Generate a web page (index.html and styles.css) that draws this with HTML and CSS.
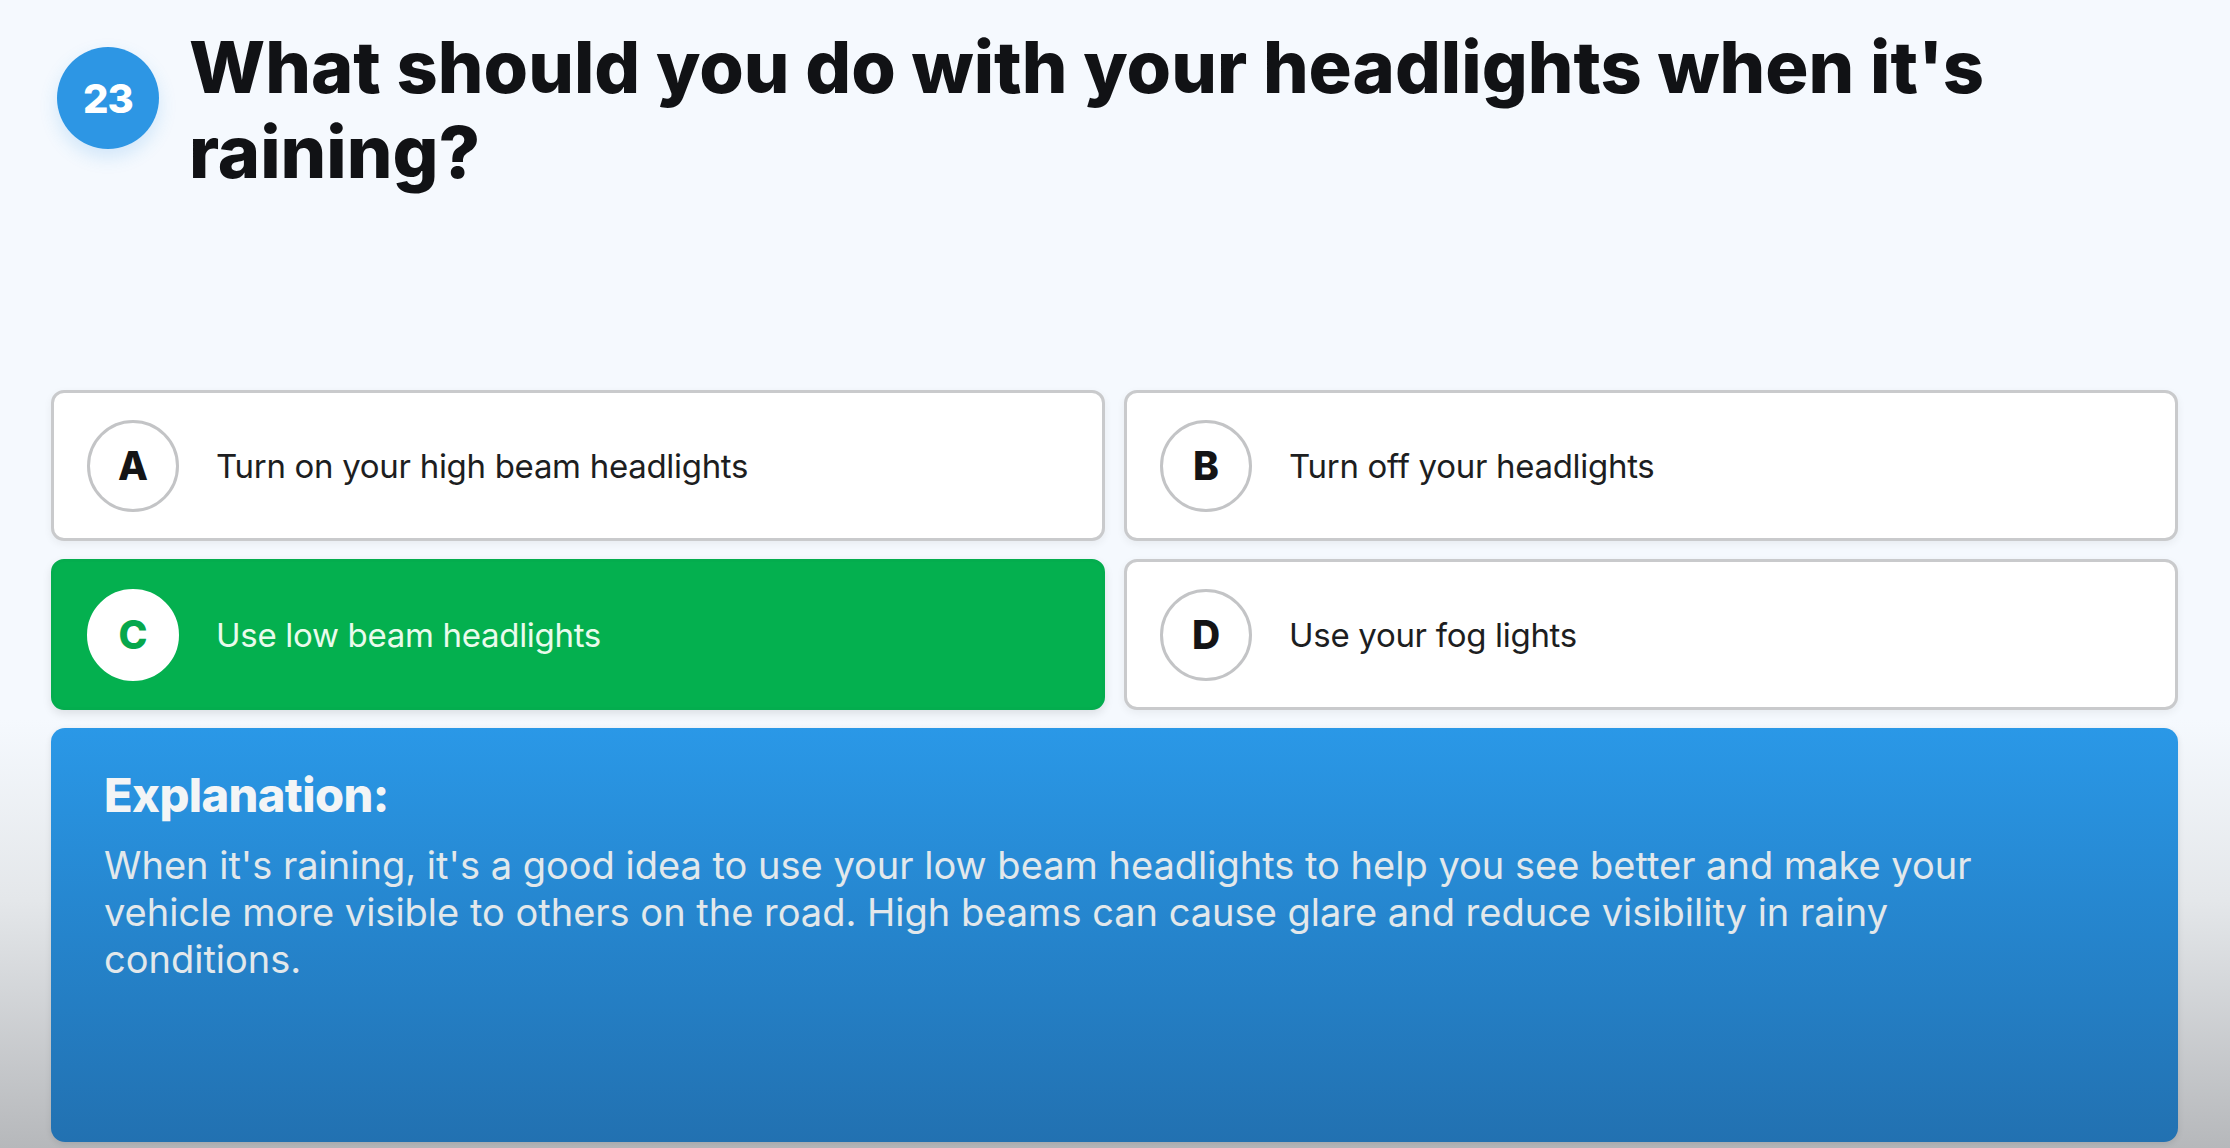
FILE: index.html
```html
<!DOCTYPE html>
<html lang="en">
<head>
<meta charset="utf-8">
<title>Quiz Question 23</title>
<link rel="stylesheet" href="styles.css">
</head>
<body>
<main class="page">
  <header class="question">
    <div class="badge">23</div>
    <h1 class="question-text">What should you do with your headlights when it's raining?</h1>
  </header>

  <section class="options">
    <div class="option">
      <span class="letter">A</span>
      <span class="option-text">Turn on your high beam headlights</span>
    </div>
    <div class="option">
      <span class="letter">B</span>
      <span class="option-text">Turn off your headlights</span>
    </div>
    <div class="option correct">
      <span class="letter">C</span>
      <span class="option-text">Use low beam headlights</span>
    </div>
    <div class="option">
      <span class="letter">D</span>
      <span class="option-text">Use your fog lights</span>
    </div>
  </section>

  <section class="explanation">
    <h2 class="explanation-title">Explanation:</h2>
    <p class="explanation-text">When it's raining, it's a good idea to use your low beam headlights to help you see better and make your vehicle more visible to others on the road. High beams can cause glare and reduce visibility in rainy conditions.</p>
  </section>
</main>
</body>
</html>
```

FILE: styles.css
```css
* {
  box-sizing: border-box;
}

html, body {
  margin: 0;
  padding: 0;
}

body {
  width: 2230px;
  height: 1148px;
  overflow: hidden;
  font-family: Inter, "Noto Sans", "Liberation Sans", sans-serif;
  background: linear-gradient(to bottom, #f5f9fe 0px, #f5f9fe 720px, #e4e7ea 900px, #b6b8bb 1148px);
}

.page {
  padding: 0 52px 0 51px;
}

.question {
  height: 390px;
  display: flex;
  align-items: flex-start;
  padding-left: 6px;
  padding-top: 24px;
}

.badge {
  flex: 0 0 102px;
  width: 102px;
  height: 102px;
  margin-top: 23px;
  border-radius: 50%;
  background: #2d96e4;
  color: #ffffff;
  font-weight: 800;
  font-size: 40px;
  display: flex;
  align-items: center;
  justify-content: center;
  box-shadow: 0 8px 18px rgba(45, 150, 228, 0.18);
  letter-spacing: -1px;
}

.question-text {
  margin: 0 0 0 30px;
  font-size: 72px;
  line-height: 85px;
  font-weight: 800;
  color: #111215;
  letter-spacing: 0;
  max-width: 1900px;
}

.options {
  display: grid;
  grid-template-columns: 1fr 1fr;
  grid-auto-rows: 151px;
  column-gap: 19px;
  row-gap: 18px;
}

.option {
  display: flex;
  align-items: center;
  padding-left: 33px;
  background: #ffffff;
  border: 3px solid #c9cacc;
  border-radius: 13px;
  box-shadow: 0 3px 8px rgba(0, 0, 0, 0.06);
}

.letter {
  flex: 0 0 92px;
  width: 92px;
  height: 92px;
  border-radius: 50%;
  border: 3px solid #c3c4c6;
  display: flex;
  align-items: center;
  justify-content: center;
  font-size: 39px;
  font-weight: 800;
  color: #141416;
  background: #ffffff;
}

.option-text {
  margin-left: 37px;
  font-size: 33px;
  color: #1d1e21;
  letter-spacing: -0.3px;
}

.option.correct {
  background: #04b04f;
  border-color: #04ad4e;
  box-shadow: 0 4px 10px rgba(0, 0, 0, 0.10);
}

.option.correct .letter {
  border-color: #ffffff;
  color: #07a74c;
}

.option.correct .option-text {
  color: #e9fbec;
}

.explanation {
  margin-top: 18px;
  height: 414px;
  border-radius: 14px;
  background: linear-gradient(to bottom, #2a98e7 0%, #2584cc 50%, #2271b1 100%);
  padding: 39px 140px 0 53px;
  box-shadow: 0 2px 6px rgba(0, 0, 0, 0.10);
}

.explanation-title {
  margin: 0;
  font-size: 47px;
  line-height: 56px;
  font-weight: 800;
  color: #f3f5f6;
  letter-spacing: -0.6px;
}

.explanation-text {
  margin: 19px 0 0 0;
  font-size: 38px;
  line-height: 47px;
  color: #e2e8eb;
  letter-spacing: 0;
}
```
